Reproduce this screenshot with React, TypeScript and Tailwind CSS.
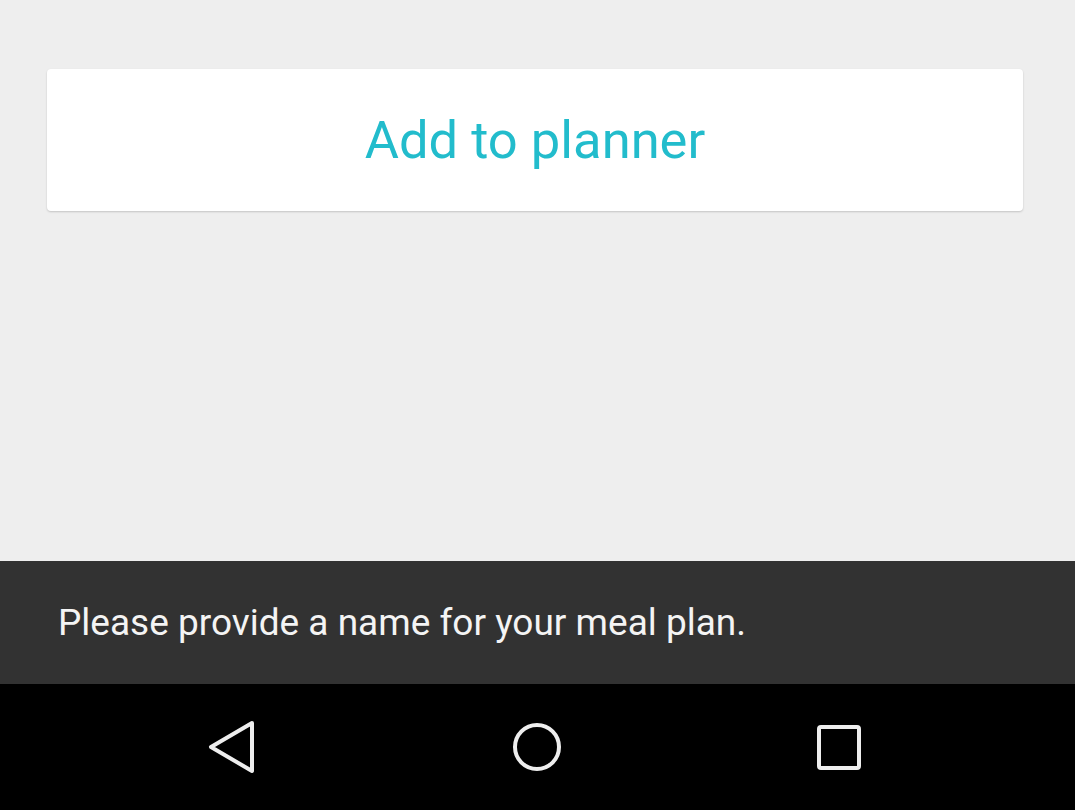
export default function App() {
  return (
    <div className="flex h-[810px] w-full flex-col bg-[#eeeeee] font-['Roboto',sans-serif]">
      {/* content */}
      <div className="flex-1 pl-[47px] pr-[52px] pt-[69px]">
        <button className="flex h-[142px] w-full items-center justify-center rounded-[4px] bg-white shadow-[0_1px_2px_rgba(0,0,0,0.18)]">
          <span className="text-[52.5px] leading-none text-[#22bccc]">Add to planner</span>
        </button>
      </div>

      {/* snackbar */}
      <div className="flex h-[123px] items-center bg-[#323232] px-[58px]">
        <span className="text-[37px] leading-none text-[#f4f4f4]">Please provide a name for your meal plan.</span>
      </div>

      {/* nav bar */}
      <div className="flex h-[126px] items-center justify-between bg-black pl-[207px] pr-[213px]">
        <svg width="50" height="54" viewBox="0 0 50 54" fill="none" stroke="#eeeeee" strokeWidth="4" strokeLinejoin="round">
          <path d="M45 3 L4 27 L45 51 Z" />
        </svg>
        <svg width="52" height="52" viewBox="0 0 52 52" fill="none" stroke="#eeeeee" strokeWidth="4">
          <circle cx="26" cy="26" r="22" />
        </svg>
        <svg width="46" height="47" viewBox="0 0 46 47" fill="none" stroke="#eeeeee" strokeWidth="4">
          <rect x="3" y="3" width="40" height="41" rx="2" />
        </svg>
      </div>
    </div>
  );
}
